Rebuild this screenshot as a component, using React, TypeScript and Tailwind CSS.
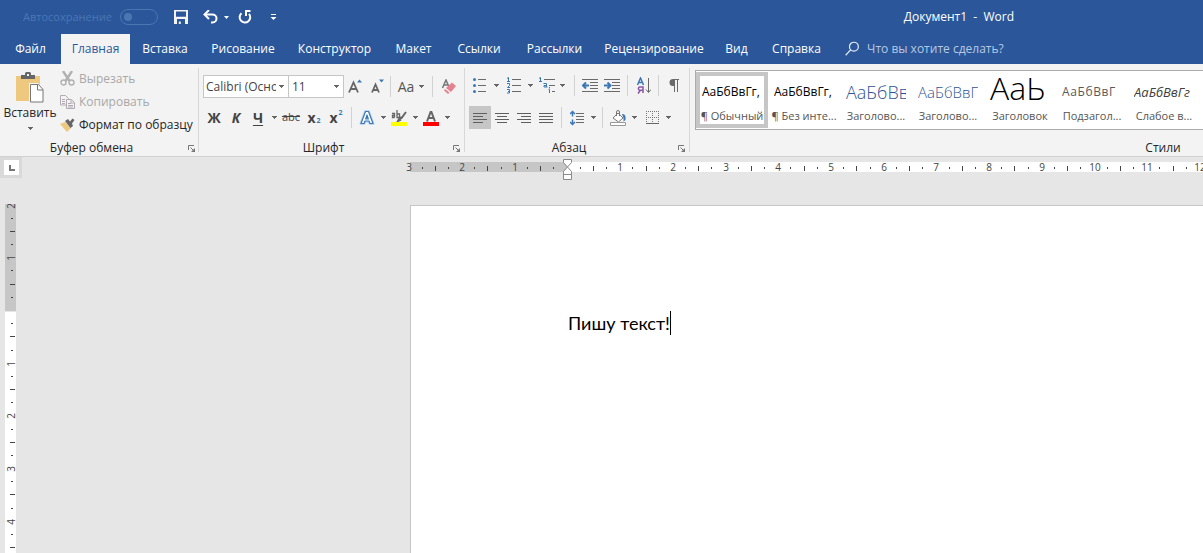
import React from "react";

type Kids = { children?: React.ReactNode };

const tabs = [
  { name: "Файл", cls: "w-[61px]" },
  { name: "Главная", cls: "w-[69px]", active: true },
  { name: "Вставка", cls: "w-[70px]" },
  { name: "Рисование", cls: "w-[86px]" },
  { name: "Конструктор", cls: "w-[97px]" },
  { name: "Макет", cls: "w-[61px]" },
  { name: "Ссылки", cls: "w-[70px]" },
  { name: "Рассылки", cls: "w-[81px]" },
  { name: "Рецензирование", cls: "w-[118px]" },
  { name: "Вид", cls: "w-[47px]" },
  { name: "Справка", cls: "w-[73px]" },
];

const styles = [
  { name: "¶ Обычный", sample: "АаБбВвГг,", cls: "leading-8 text-[12px] text-black", selected: true },
  { name: "¶ Без инте...", sample: "АаБбВвГг,", cls: "leading-8 text-[12px] text-black" },
  { name: "Заголово...", sample: "АаБбВв", cls: "leading-8 text-[18px] font-light text-[#2f5496]" },
  { name: "Заголово...", sample: "АаБбВвГ", cls: "leading-8 text-[15px] font-light text-[#2f5496]" },
  { name: "Заголовок", sample: "АаЬ", cls: "leading-6 text-[32px] font-light text-black" },
  { name: "Подзагол...", sample: "АаБбВвГ", cls: "leading-8 text-[12px] tracking-wider text-[#5a5a5a]" },
  { name: "Слабое в...", sample: "АаБбВвГг", cls: "leading-8 text-[13px] italic text-[#404040]" },
];

function Arrow({ className = "" }: { className?: string }) {
  return (
    <svg width="5" height="3" viewBox="0 0 5 3" shapeRendering="crispEdges" className={className} aria-hidden="true">
      <path d="M0 0h5v1H4v1H3v1H2V2H1V1H0z" fill="#666" />
    </svg>
  );
}

function Tool({ label, children, on = false, narrow = false }: Kids & { label: string; on?: boolean; narrow?: boolean }) {
  return (
    <button
      aria-label={label}
      className={`flex h-[23px] shrink-0 items-center justify-center ${narrow ? "w-5" : "w-[22px]"} ${on ? "bg-[#c6c6c6]" : ""}`}
    >
      {children}
    </button>
  );
}

function Drop({ label }: { label: string }) {
  return (
    <button aria-label={label} className="flex h-[23px] w-[10px] shrink-0 items-center justify-center">
      <Arrow />
    </button>
  );
}

function Sep({ className = "mx-1" }: { className?: string }) {
  return <span className={`h-[21px] w-px shrink-0 bg-[#d2d2d2] ${className}`} />;
}

function GroupLabel({ children, launcher = true }: Kids & { launcher?: boolean }) {
  return (
    <div className="mt-auto flex h-4 items-center px-[3px] text-[#262626]">
      <span className="flex-1 pr-[7px] text-center">{children}</span>
      {launcher && (
        <button aria-label="Параметры группы">
          <svg width="9" height="9" viewBox="0 0 9 9" fill="none" stroke="#777" aria-hidden="true">
            <path d="M1.500 6V1.500H7M3.500 3.500l3 3" />
            <path d="M8 4v4H4z" fill="#777" stroke="none" />
          </svg>
        </button>
      )}
    </div>
  );
}

function Lines({ rows }: { rows: [number, number][] }) {
  return (
    <svg width="14" height="10" viewBox="0 0 14 10" shapeRendering="crispEdges" aria-hidden="true">
      {rows.map(([x, w], i) => (
        <rect key={i} x={x} y={i * 3} width={w} height="1" fill="#5f5f5f" />
      ))}
    </svg>
  );
}

const alignments: { label: string; rows: [number, number][] }[] = [
  { label: "По левому краю", rows: [[0, 14], [0, 10], [0, 14], [0, 10]] },
  { label: "По центру", rows: [[0, 14], [2, 10], [0, 14], [2, 10]] },
  { label: "По правому краю", rows: [[0, 14], [4, 10], [0, 14], [4, 10]] },
  { label: "По ширине", rows: [[0, 14], [0, 14], [0, 14], [0, 14]] },
];

function Indent({ right = false }: { right?: boolean }) {
  return (
    <svg width="16" height="13" viewBox="0 0 16 13" aria-hidden="true">
      <path d="M0 .5h16M8 3.500h8M8 6.500h8M8 9.500h8M0 12.500h16" stroke="#6a6a6a" />
      <path
        d={right ? "M0 6.500h6M3.500 3.500l3 3-3 3" : "M7 6.500H1M4 3.500l-3 3 3 3"}
        stroke="#3b78b5"
        strokeWidth="2"
        fill="none"
      />
    </svg>
  );
}

const CM = 52.7;

function RulerMarks({ from, to, vertical = false, origin }: { from: number; to: number; vertical?: boolean; origin: number }) {
  const marks: React.ReactNode[] = [];
  for (let q = from; q <= to; q++) {
    if (q === 0) continue;
    const p = Math.round(origin + (q * CM) / 4);
    if (q % 4 === 0) {
      marks.push(
        <text
          key={q}
          textAnchor="middle"
          fontSize="10"
          fill="#444"
          transform={vertical ? `translate(10 ${p}) rotate(-90)` : `translate(${p} 9)`}
        >
          {Math.abs(q / 4)}
        </text>
      );
    } else {
      const long = q % 2 === 0;
      marks.push(
        vertical ? (
          <rect key={q} x={long ? 5 : 6} y={p - 1} width={long ? 5 : 2} height="1" fill="#444" />
        ) : (
          <rect key={q} x={p - 1} y={long ? 4 : 5} width="1" height={long ? 5 : 2} fill="#444" />
        )
      );
    }
  }
  return <>{marks}</>;
}

function TitleBar() {
  return (
    <div className="flex h-[34px] items-center text-white">
      <label className="flex items-center pl-[23px] text-[#4a76b4]">
        <span className="w-[97px] text-[11px]">Автосохранение</span>
        <input type="checkbox" disabled className="peer sr-only" />
        <span className="flex h-4 w-[38px] items-center rounded-full border border-[#4a76b4] px-[3px]">
          <span className="size-2 rounded-full bg-[#4a76b4]" />
        </span>
      </label>
      <button aria-label="Сохранить" className="ml-4">
        <svg width="14" height="14" viewBox="0 0 14 14" fill="#f3f3f3" aria-hidden="true">
          <path fillRule="evenodd" d="M0 0h14v14H0zM2 1.500v5.200h10V1.500zM3 9v5h1.800v-2.500h2V14H11V9z" />
        </svg>
      </button>
      <button aria-label="Отменить" className="ml-[15px]">
        <svg width="15" height="14" viewBox="0 0 15 14" fill="none" stroke="#fff" strokeWidth="2" aria-hidden="true">
          <path d="M2 4.500h7.500a4 4 0 0 1 0 8H8" />
          <path d="M6 0L1.500 4.500 6 9" />
        </svg>
      </button>
      <button aria-label="Список отмены" className="ml-1 flex h-4 w-2 items-center justify-center">
        <svg width="5" height="3" viewBox="0 0 5 3" aria-hidden="true"><path d="M0 0h5L2.500 3z" fill="#fff" /></svg>
      </button>
      <button aria-label="Повторить" className="ml-2">
        <svg width="14" height="14" viewBox="0 0 14 14" fill="none" stroke="#fff" strokeWidth="2" aria-hidden="true">
          <path d="M3.500 3.200a5.300 5.300 0 1 0 7.500.6" />
          <path d="M12.500 1H8v5" />
        </svg>
      </button>
      <button aria-label="Настройка панели" className="ml-[18px]">
        <svg width="7" height="7" viewBox="0 0 7 7" fill="#fff" aria-hidden="true">
          <path d="M1 0h5v1H1zM.5 3h6L3.500 6z" />
        </svg>
      </button>
      <h1 className="mr-[189px] ml-auto whitespace-pre">Документ1  -  Word</h1>
    </div>
  );
}

function Clipboard() {
  return (
    <section className="flex w-[199px] shrink-0 flex-col">
      <div className="flex">
        <button className="flex w-[60px] flex-col items-center pt-2 text-[#262626]">
          <svg width="28" height="31" viewBox="0 0 28 31" aria-hidden="true">
            <rect y="4" width="24" height="25" fill="#edc87e" />
            <path d="M5 7V3h4V1.500A1.500 1.500 0 0 1 10.500 0h3A1.500 1.500 0 0 1 15 1.500V3h4v4z" fill="#666" />
            <path d="M11 2h2v2h-2z" fill="#f3f3f3" />
            <path d="M13 11h9l6 6v14H13z" fill="#f3f3f3" />
            <path d="M14.500 12.500h8l4.500 5v12.500H14.500z" fill="#fff" stroke="#777" />
            <path d="M21.500 12.500v5.500H27" fill="none" stroke="#777" />
          </svg>
          <span className="mt-[2px] leading-4">Вставить</span>
          <Arrow className="mt-[6px]" />
        </button>
        <div className="flex flex-col pt-[3px] text-[#a8a8a8]">
          <button disabled className="flex h-[23px] items-center gap-1">
            <svg width="15" height="15" viewBox="0 0 15 15" fill="none" stroke="#b1b1b1" aria-hidden="true">
              <path d="M3 0l6.500 10M12 0L5.500 10" strokeWidth="2.400" />
              <circle cx="3.500" cy="11.500" r="2.500" strokeWidth="1.400" />
              <circle cx="11.500" cy="11.500" r="2.500" strokeWidth="1.400" />
            </svg>
            Вырезать
          </button>
          <button disabled className="flex h-[23px] items-center gap-1">
            <svg width="15" height="14" viewBox="0 0 15 14" fill="#f3f3f3" stroke="#b3abb3" aria-hidden="true">
              <path d="M.5.500h5l3 3v6.500h-8zM2 4.500h3M2 6.500h3M2 8.500h3" />
              <path d="M6.500 4.500h5l3 3v6h-8zM11 5v3h3M8 8.500h3M8 10.500h5M8 12h5" />
            </svg>
            Копировать
          </button>
          <button className="flex h-[23px] items-center gap-1 whitespace-nowrap text-[#262626]">
            <svg width="15" height="14" viewBox="0 0 15 14" aria-hidden="true">
              <path d="M0 6l5-2 6 6-4 4z" fill="#edc87e" />
              <path d="M5 3l3-2 2 2.500L12.500.500l2 1.500-2.500 3.500L13 8l-2.500 2z" fill="#666" />
            </svg>
            Формат по образцу
          </button>
        </div>
      </div>
      <GroupLabel>Буфер обмена</GroupLabel>
    </section>
  );
}

function FontGroup() {
  return (
    <section className="flex w-[265px] shrink-0 flex-col pt-[11px]">
      <div className="flex h-[23px] items-center pl-1">
        <button aria-label="Шрифт" className="flex h-[23px] w-[86px] items-center justify-between border border-[#c6c6c6] bg-white pr-1 pl-[2px] text-[#444]">
          <span className="w-[70px] overflow-hidden text-left whitespace-nowrap">Calibri (Осно</span>
          <Arrow />
        </button>
        <button aria-label="Размер шрифта" className="-ml-px flex h-[23px] w-[56px] items-center justify-between border border-[#c6c6c6] bg-white pr-1 pl-[3px] text-[#444]">
          11
          <Arrow />
        </button>
        <Tool label="Увеличить размер">
          <svg width="14" height="15" viewBox="0 0 14 15" aria-hidden="true">
            <path d="M1 13.500L5.500 3.500 10 13.500M3 10h5" fill="none" stroke="#666" strokeWidth="1.800" />
            <path d="M9 3.500h5L11.500.500z" fill="#3b78b5" />
          </svg>
        </Tool>
        <Tool label="Уменьшить размер">
          <svg width="14" height="15" viewBox="0 0 14 15" aria-hidden="true">
            <path d="M2 13.500L5.500 5.500 9 13.500M3.500 11h4" fill="none" stroke="#666" strokeWidth="1.800" />
            <path d="M9 .5h5l-2.500 3z" fill="#3b78b5" />
          </svg>
        </Tool>
        <Sep className="mr-[3px] ml-[2px]" />
        <button aria-label="Регистр" className="flex h-[23px] w-[34px] items-center justify-center gap-[5px] text-[14px] text-[#555]">
          Aa
          <Arrow />
        </button>
        <Sep className="mr-[5px] ml-1" />
        <Tool label="Очистить форматирование">
          <svg width="16" height="16" viewBox="0 0 16 16" aria-hidden="true">
            <path d="M1.500 9L5 1l3.500 8M2.500 6h5" fill="none" stroke="#777" strokeWidth="1.500" />
            <path d="M11 3.500l4 3.500-5 6-5-4z" fill="#e5828f" />
            <path d="M4 10l4.500 3.500-1.500 1.500-4-3.500z" fill="#e5828f" />
          </svg>
        </Tool>
      </div>
      <div className="mt-2 flex h-[23px] items-center pl-1 text-[14px] text-[#444]">
        <Tool label="Полужирный"><b>Ж</b></Tool>
        <Tool label="Курсив"><b className="italic">К</b></Tool>
        <Tool label="Подчеркнутый"><b className="underline underline-offset-2">Ч</b></Tool>
        <Drop label="Вид подчеркивания" />
        <button aria-label="Зачеркнутый" className="flex h-[23px] w-6 items-center justify-center text-[11px] line-through">abc</button>
        <Tool label="Подстрочный знак"><b className="text-[14px]">x</b><b className="mt-2 ml-px text-[7px] text-[#3b78b5]">2</b></Tool>
        <Tool label="Надстрочный знак"><b className="text-[14px]">x</b><b className="mb-2 ml-px text-[7px] text-[#3b78b5]">2</b></Tool>
        <Sep />
        <Tool label="Текстовые эффекты">
          <svg width="16" height="17" viewBox="0 0 16 17" strokeLinejoin="round" aria-hidden="true">
            <path fillRule="evenodd" d="M6.500 2.500h3L14 14.500h-3l-1-2.500H6l-1 2.500H2zM8 6l-1.300 4h2.600z" fill="#bcd4ee" stroke="#bcd4ee" strokeWidth="3" />
            <path fillRule="evenodd" d="M6.500 2.500h3L14 14.500h-3l-1-2.500H6l-1 2.500H2zM8 6l-1.300 4h2.600z" fill="#fff" stroke="#3b78b5" strokeWidth="1.200" />
          </svg>
        </Tool>
        <Drop label="Эффекты" />
        <Tool label="Цвет выделения">
          <span className="flex flex-col">
            <svg width="16" height="12" viewBox="0 0 16 12" fill="none" stroke="#666" strokeWidth="1.300" aria-hidden="true">
              <path d="M1 3.500h2.500v4M3.500 5.500H1.500v2h2M6 0v7.500h2.500V4H6" />
              <path d="M15 2L10.500 8l-1.500-.5L7 11l3-1.500" strokeWidth="2" />
            </svg>
            <span className="h-1 w-4 bg-[#ff0]" />
          </span>
        </Tool>
        <Drop label="Цвета выделения" />
        <Tool label="Цвет текста">
          <span className="flex flex-col items-center">
            <svg width="10" height="12" viewBox="0 0 10 12" fill="none" stroke="#666" strokeWidth="2" aria-hidden="true">
              <path d="M1 11.500L4.600 2h.8L9 11.500M2.500 8h5" />
            </svg>
            <span className="h-1 w-4 bg-[#f00]" />
          </span>
        </Tool>
        <Drop label="Цвета текста" />
      </div>
      <GroupLabel>Шрифт</GroupLabel>
    </section>
  );
}

function Paragraph() {
  return (
    <section className="flex w-[224px] shrink-0 flex-col pt-[10px]">
      <div className="flex h-[23px] items-center pl-1">
        <Tool label="Маркеры">
          <svg width="14" height="15" viewBox="0 0 14 15" aria-hidden="true">
            <path d="M5 1.500h8M5 7.500h8M5 13.500h8" stroke="#6a6a6a" />
            <g fill="#3b78b5"><circle cx="1.500" cy="1.500" r="1.500" /><circle cx="1.500" cy="7.500" r="1.500" /><circle cx="1.500" cy="13.500" r="1.500" /></g>
          </svg>
        </Tool>
        <Drop label="Виды маркеров" />
        <span className="w-[2px]" />
        <Tool label="Нумерация">
          <svg width="14" height="17" viewBox="0 0 14 17" aria-hidden="true">
            <path d="M5 2.500h9M5 8.500h9M5 14.500h9" stroke="#6a6a6a" />
            <path d="M0 1.500l1.500-1V4M0 4.500h3M0 6.500h2.500v2L.5 10.500H3M0 12.500h2.500V16H0M1 14.500h2" fill="none" stroke="#3b78b5" />
          </svg>
        </Tool>
        <Drop label="Виды нумерации" />
        <span className="w-[2px]" />
        <Tool label="Многоуровневый список" narrow>
          <svg width="17" height="17" viewBox="0 0 17 17" aria-hidden="true">
            <path d="M5 2.500h11M10 8.500h6M13 14.500h3" stroke="#6a6a6a" />
            <path d="M0 1.500l1.500-1V4M0 4.500h3M4.500 6.500h3V10H5V8.500h2M7.500 10h1M10.500 10v1.500M9.500 12.500h1V16" fill="none" stroke="#3b78b5" />
          </svg>
        </Tool>
        <Drop label="Виды списков" />
        <Sep className="mr-1 ml-[7px]" />
        <Tool label="Уменьшить отступ"><Indent /></Tool>
        <Tool label="Увеличить отступ"><Indent right /></Tool>
        <Sep className="mr-[5px] ml-1" />
        <Tool label="Сортировка">
          <svg width="14" height="17" viewBox="0 0 14 17" fill="none" aria-hidden="true">
            <path d="M.5 8L3.500 1l3 7M1.500 5.500h4" stroke="#3b78b5" strokeWidth="1.500" />
            <path d="M6 16V10H3a1.500 1.500 0 0 0 0 3.200h3M3.500 13L1 16.500" stroke="#8a56a8" strokeWidth="1.500" />
            <path d="M11.500 1v14M9 12.500l2.500 3 2.500-3" stroke="#666" />
          </svg>
        </Tool>
        <Sep className="mr-1 ml-[3px]" />
        <Tool label="Отобразить все знаки">
          <svg width="10" height="13" viewBox="0 0 10 13" aria-hidden="true">
            <path d="M4 0h6v1H9v12H8V1H6v12H5V7H4a3.500 3.500 0 0 1 0-7z" fill="#6a6a6a" />
          </svg>
        </Tool>
      </div>
      <div className="mt-[9px] flex h-[23px] items-center pl-1">
        {alignments.map((a, i) => (
          <Tool key={a.label} label={a.label} on={i === 0}><Lines rows={a.rows} /></Tool>
        ))}
        <Sep />
        <Tool label="Интервал">
          <svg width="14" height="16" viewBox="0 0 14 16" fill="none" aria-hidden="true">
            <path d="M6 3.500h8M6 6.500h8M6 9.500h8M6 12.500h8" stroke="#6a6a6a" />
            <path d="M2.500 1v5.500M0 4l2.500-2.500L5 4M2.500 9.500V15M0 12l2.500 2.500L5 12" stroke="#3b78b5" strokeWidth="1.500" />
          </svg>
        </Tool>
        <Drop label="Интервалы" />
        <Sep />
        <Tool label="Заливка">
          <svg width="17" height="16" viewBox="0 0 17 16" fill="none" aria-hidden="true">
            <path d="M8 3l5 5-4.500 4L3 8z" fill="#fff" stroke="#777" />
            <path d="M6.500 6V2a1.500 1.500 0 0 1 3 0v4" stroke="#777" />
            <path d="M12 4c3 0 4 2 3.500 6l-2 1.500V8z" fill="#3b78b5" />
            <path d="M.5 12.500h15v3H.5z" fill="#fff" stroke="#999" />
          </svg>
        </Tool>
        <Drop label="Цвета заливки" />
        <span className="w-[2px]" />
        <Tool label="Границы">
          <svg width="13" height="13" viewBox="0 0 13 13" aria-hidden="true">
            <path d="M0 .5h13M0 6.500h13M.5 0v13M6.500 0v13M12.500 0v13" stroke="#777" strokeDasharray="1 1" />
            <path d="M0 12.500h13" stroke="#666" />
          </svg>
        </Tool>
        <Drop label="Виды границ" />
      </div>
      <GroupLabel>Абзац</GroupLabel>
    </section>
  );
}

function StylesGroup() {
  return (
    <section className="min-w-0 flex-1 overflow-hidden">
      <div className="flex h-full w-[948px] flex-col pt-[6px] pl-[5px]">
        <div className="flex h-[60px] items-center border border-[#ababab] bg-white">
          {styles.map((s, i) => (
            <button
              key={i}
              className={`flex h-14 w-[72px] shrink-0 flex-col items-center border-4 ${s.selected ? "border-[#c6c6c6]" : "border-transparent"}`}
            >
              <span className={`h-8 w-[60px] overflow-hidden text-left whitespace-nowrap ${s.cls}`}>
                {s.sample}
              </span>
              <span className="mt-px text-[11px] leading-4 whitespace-nowrap text-[#555]">{s.name}</span>
            </button>
          ))}
        </div>
        <GroupLabel launcher={false}>Стили</GroupLabel>
      </div>
    </section>
  );
}

export default function App() {
  return (
    <div className="flex h-screen flex-col overflow-hidden bg-[#e6e6e6] font-['Open_Sans','Noto_Sans',sans-serif] text-[12px]">
      <header className="shrink-0 bg-[#2b579a]">
        <TitleBar />
        <nav className="flex h-[30px] items-stretch text-white">
          {tabs.map((t) => (
            <button key={t.name} className={`shrink-0 whitespace-nowrap ${t.cls} ${t.active ? "bg-[#f3f3f3] text-[#2b579a]" : ""}`}>
              {t.name}
            </button>
          ))}
          <label className="flex flex-1 items-center gap-2 pl-3">
            <svg width="15" height="16" viewBox="0 0 15 16" fill="none" stroke="#e6ecf5" strokeWidth="1.300" aria-hidden="true">
              <circle cx="9.500" cy="5.500" r="4.700" />
              <path d="M6 9L.7 14.700" />
            </svg>
            <input aria-label="Поиск" placeholder="Что вы хотите сделать?" className="w-full bg-transparent outline-none placeholder:text-[#b8c8e2]" />
          </label>
        </nav>
      </header>

      <div className="flex h-[93px] shrink-0 border-b border-[#d0d0d0] bg-[#f3f3f3]">
        <Clipboard />
        <span className="-ml-px mt-1 h-[84px] w-px shrink-0 bg-[#d8d8d8]" />
        <FontGroup />
        <span className="mt-1 h-[84px] w-px shrink-0 bg-[#d8d8d8]" />
        <Paragraph />
        <span className="mt-1 h-[84px] w-px shrink-0 bg-[#d8d8d8]" />
        <StylesGroup />
      </div>

      <div className="flex h-[47px] shrink-0">
        <div className="h-[21px] w-[22px] shrink-0 bg-[#d9d9d9] pt-[3px] pl-[4px]">
          <button aria-label="Тип табуляции" className="flex size-[15px] items-center justify-center bg-white pt-px pl-px">
            <span className="size-[6px] border-b-2 border-l-2 border-[#777]" />
          </button>
        </div>
        <svg height="26" className="mt-[5px] ml-[378px] min-w-0 flex-1 overflow-visible" aria-label="Горизонтальная линейка">
          <rect x="10" width="157" height="10" fill="#c6c6c6" />
          <rect x="167" width="100%" height="10" fill="#fff" />
          <RulerMarks from={-12} to={60} origin={167.5} />
          <g fill="#fff" stroke="#8a8a8a">
            <path d="M163.500-2.500h8v3l-4 4.500 4 4.500v8h-8v-8l4-4.500-4-4.500z" />
            <path d="M163.500 12.500h8" />
          </g>
        </svg>
      </div>

      <main className="flex min-h-0 flex-1">
        <svg width="11" className="ml-[5px] h-full shrink-0" aria-label="Вертикальная линейка">
          <rect width="11" height="107" fill="#c6c6c6" />
          <rect y="108" width="11" height="100%" fill="#fff" />
          <RulerMarks from={-8} to={40} origin={107} vertical />
        </svg>
        <article className="mt-px ml-[394px] min-w-0 flex-1 border-t border-l border-[#c6c6c6] bg-white pt-[105px] pl-[157px]">
          <p className="flex items-center font-['Lato','Open_Sans',sans-serif] text-[18px] leading-6 text-black">
            Пишу текст!
            <span className="h-6 w-px bg-black" />
          </p>
        </article>
      </main>
    </div>
  );
}
